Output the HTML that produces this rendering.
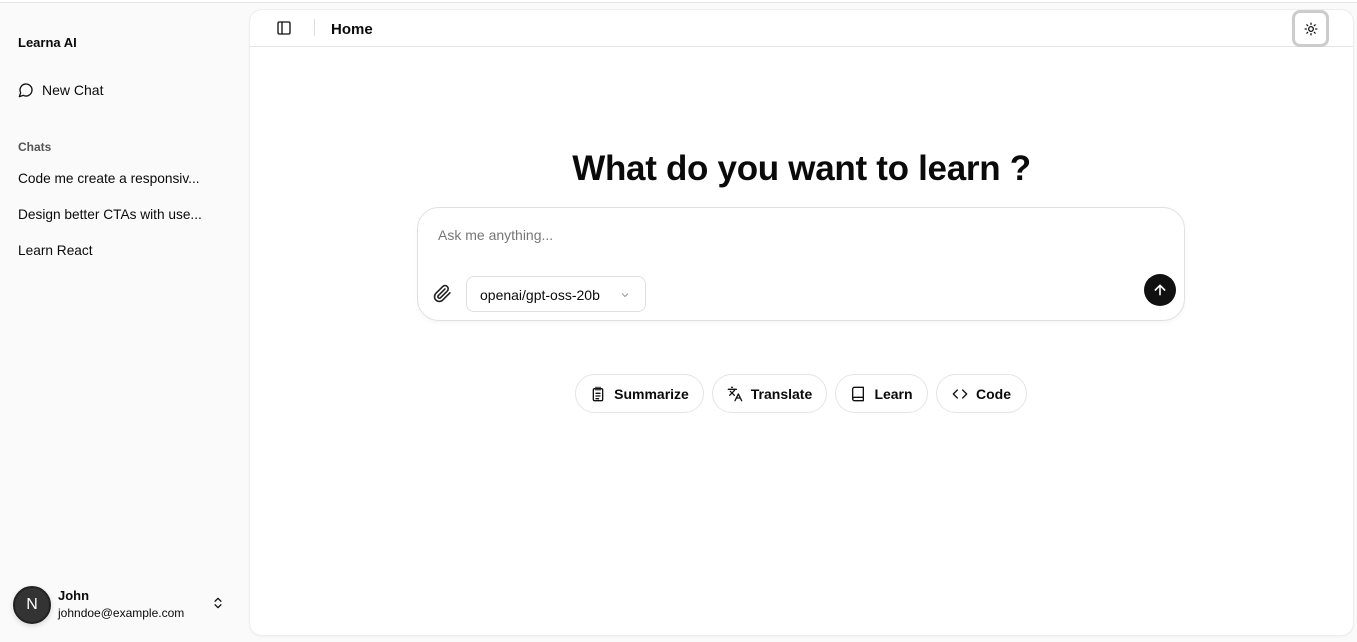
<!DOCTYPE html>
<html><head><style>
*{box-sizing:border-box;margin:0;padding:0}
body{width:1357px;height:642px;overflow:hidden;background:#fafafa;font-family:"Liberation Sans",sans-serif;color:#0a0a0a;position:relative}
.topline{position:absolute;left:0;top:0;width:1357px;height:3px;border-bottom:1px solid #e5e5e5;background:#fff}
.abs{position:absolute}
.main{position:absolute;left:250px;top:10px;width:1103px;height:625px;background:#fff;border-radius:12px;box-shadow:0 0 0 1px #eee,0 1px 3px rgba(0,0,0,.08)}
.hdr{position:absolute;left:0;top:0;right:0;height:37px;border-bottom:1px solid #e5e5e5}
.chip{position:absolute;top:364px;height:39px;border:1px solid #e5e5e5;border-radius:20px;background:#fff;display:flex;align-items:center;justify-content:center;gap:8px;font-size:14px;font-weight:bold}
svg{display:block}
.ci{font-size:13.7px}
</style></head><body>
<div class="topline"></div>
<div class="abs" style="left:18px;top:35px;font-size:13px;font-weight:bold">Learna AI</div>
<svg class="abs" style="left:18px;top:82px" width="16" height="16" viewBox="0 0 24 24" fill="none" stroke="#111" stroke-width="2" stroke-linecap="round" stroke-linejoin="round"><path d="M7.9 20A9 9 0 1 0 4 16.1L2 22Z"/></svg>
<div class="abs" style="left:42px;top:82px;font-size:14px">New Chat</div>
<div class="abs" style="left:18px;top:140px;font-size:12px;font-weight:bold;color:#555">Chats</div>
<div class="abs ci" style="left:18px;top:171px">Code me create a responsiv...</div>
<div class="abs ci" style="left:18px;top:207px">Design better CTAs with use...</div>
<div class="abs ci" style="left:18px;top:243px">Learn React</div>
<div class="abs" style="left:13px;top:586px;width:38px;height:38px;border-radius:50%;background:#333;border:2px solid #222;color:#fff;font-size:16px;display:flex;align-items:center;justify-content:center;box-shadow:0 2px 6px rgba(0,0,0,.15)">N</div>
<div class="abs" style="left:58px;top:588px;font-size:13px;font-weight:bold">John</div>
<div class="abs" style="left:58px;top:606px;font-size:12px">johndoe@example.com</div>
<svg class="abs" style="left:211px;top:595px" width="14" height="16" viewBox="0 0 24 24" fill="none" stroke="#111" stroke-width="2.2" stroke-linecap="round" stroke-linejoin="round"><path d="m7 15 5 5 5-5M7 9l5-5 5 5"/></svg>
<div class="main">
 <div class="hdr">
  <svg class="abs" style="left:26px;top:10px" width="16" height="16" viewBox="0 0 24 24" fill="none" stroke="#111" stroke-width="2" stroke-linejoin="round"><rect x="3" y="3" width="18" height="18" rx="2"/><path d="M9 3v18"/></svg>
  <div class="abs" style="left:64px;top:9px;width:1px;height:17px;background:#ddd"></div>
  <div class="abs" style="left:81px;top:11px;font-size:15px;font-weight:bold">Home</div>
  <div class="abs" style="left:1042px;top:0px;width:37px;height:37px;border:3px solid #ccc;border-radius:8px;background:#fff;display:flex;align-items:center;justify-content:center">
   <svg width="14" height="14" viewBox="0 0 24 24" fill="none" stroke="#111" stroke-width="2.2" stroke-linecap="round"><circle cx="12" cy="12" r="4"/><path d="M12 2v2M12 20v2M4.9 4.9l1.4 1.4M17.7 17.7l1.4 1.4M2 12h2M20 12h2M6.3 17.7l-1.4 1.4M19.1 4.9l-1.4 1.4"/></svg>
  </div>
 </div>
 <div class="abs" style="left:0;width:1103px;top:139px;text-align:center;font-size:35px;font-weight:bold;letter-spacing:-0.3px">What do you want to learn ?</div>
 <div class="abs" style="left:167px;top:197px;width:768px;height:114px;border:1px solid #e0e0e0;border-radius:22px;box-shadow:0 2px 4px rgba(0,0,0,.04)">
  <div class="abs" style="left:20px;top:19px;font-size:14px;color:#777">Ask me anything...</div>
  <svg class="abs" style="left:15px;top:76px" width="19" height="19" viewBox="0 0 24 24" fill="none" stroke="#222" stroke-width="2" stroke-linecap="round" stroke-linejoin="round"><path d="m21.4 11.1-9.2 9.2a6 6 0 0 1-8.5-8.5l8.6-8.6a4 4 0 0 1 5.7 5.7l-8.6 8.6a2 2 0 0 1-2.8-2.8l8.5-8.5"/></svg>
  <div class="abs" style="left:48px;top:68px;width:180px;height:36px;border:1px solid #e0e0e0;border-radius:8px;font-size:14px;padding:10px 0 0 13px">openai/gpt-oss-20b
   <svg class="abs" style="left:152px;top:12px" width="12" height="12" viewBox="0 0 24 24" fill="none" stroke="#999" stroke-width="2"><path d="m6 9 6 6 6-6"/></svg></div>
  <div class="abs" style="left:726px;top:66px;width:32px;height:32px;border-radius:50%;background:#111;display:flex;align-items:center;justify-content:center">
   <svg width="16" height="16" viewBox="0 0 24 24" fill="none" stroke="#fff" stroke-width="2.4" stroke-linecap="round" stroke-linejoin="round"><path d="M12 19V5M5 12l7-7 7 7"/></svg></div>
 </div>
 <div class="chip" style="left:325px;width:129px"><svg width="16" height="16" viewBox="0 0 24 24" fill="none" stroke="#111" stroke-width="2" stroke-linecap="round"><rect x="5" y="4" width="14" height="18" rx="2"/><path d="M9 2v4M15 2v4M12 2v4M9 11h6M9 15h6M9 19h4"/></svg>Summarize</div>
 <div class="chip" style="left:462px;width:115px"><svg width="16" height="16" viewBox="0 0 24 24" fill="none" stroke="#111" stroke-width="2" stroke-linecap="round" stroke-linejoin="round"><path d="m5 8 6 6M4 14l6-6 2-3M2 5h12M7 2h1M22 22l-5-10-5 10M14 18h6"/></svg>Translate</div>
 <div class="chip" style="left:585px;width:93px"><svg width="16" height="16" viewBox="0 0 24 24" fill="none" stroke="#111" stroke-width="2" stroke-linejoin="round"><path d="M4 19.5v-15A2.5 2.5 0 0 1 6.5 2H20v20H6.5a2.5 2.5 0 0 1 0-5H20"/></svg>Learn</div>
 <div class="chip" style="left:686px;width:91px"><svg width="16" height="16" viewBox="0 0 24 24" fill="none" stroke="#111" stroke-width="2" stroke-linecap="round" stroke-linejoin="round"><path d="m16 18 6-6-6-6M8 6l-6 6 6 6"/></svg>Code</div>
</div>
</body></html>
